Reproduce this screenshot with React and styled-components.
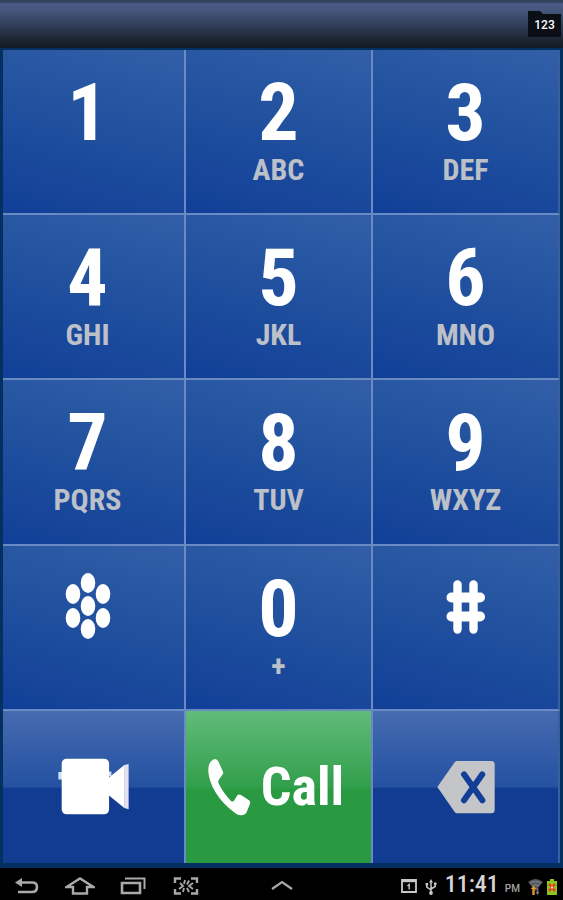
import React from "react";
import styled, { createGlobalStyle, css } from "styled-components";

const KEYS = [
  { digit: "1" },
  { digit: "2", letters: "ABC" },
  { digit: "3", letters: "DEF" },
  { digit: "4", letters: "GHI" },
  { digit: "5", letters: "JKL" },
  { digit: "6", letters: "MNO" },
  { digit: "7", letters: "PQRS" },
  { digit: "8", letters: "TUV" },
  { digit: "9", letters: "WXYZ" },
  { icon: "star", name: "Star" },
  { digit: "0", letters: "+" },
  { icon: "hash", name: "Pound" },
];

function StarIcon() {
  const dots = [
    [24, 14],
    [9, 25],
    [39, 25],
    [24, 37],
    [9, 49],
    [39, 49],
    [24, 60],
  ];

  return (
    <svg width="48" height="80" viewBox="0 0 48 80" fill="#fff">
      {dots.map(([x, y]) => (
        <ellipse key={`${x}-${y}`} cx={x} cy={y} rx="7.3" ry="9.9" />
      ))}
    </svg>
  );
}

function HashIcon() {
  return (
    <svg
      width="48"
      height="80"
      viewBox="0 0 48 80"
      stroke="#fff"
      strokeLinecap="round"
    >
      <path d="M15.5 15.5v45M31.5 15.5v45" strokeWidth="8.4" />
      <path d="M9.5 28.5h28.5M9.5 47.5h28.5" strokeWidth="10" />
    </svg>
  );
}

function CameraIcon() {
  return (
    <svg width="73" height="57" viewBox="172 156 218 172">
      <path d="M175 198h12v23h-12zM325 197h10v14h-10z" fill="#cfe0f5" />
      <rect x="185" y="158" width="143" height="168" rx="15" fill="#fff" />
      <path d="M326 216L375 176V308L326 268Z" fill="#fff" />
      <path d="M374 177L387 174V311L374 307Z" fill="#e2e2f2" />
    </svg>
  );
}

function PhoneIcon() {
  return (
    <svg width="44" height="58" viewBox="80 160 130 174" fill="#fff">
      <path d="M104 163Q111 164 114 172L127 201Q129 206 124 212L114 226Q111 231 115 239Q131 269 151 289Q157 293 161 287L170 272Q175 268 181 271L205 287Q210 291 208 297L199 320Q196 330 184 332Q172 333 163 325Q125 297 104 262Q86 232 83 202Q82 178 92 169Q98 163 104 163Z" />
    </svg>
  );
}

function DeleteIcon() {
  return (
    <svg width="58" height="54" viewBox="202 164 174 160">
      <path
        d="M203 244L255 170Q258 166 263 166H365Q375 166 375 176V313Q375 323 365 323H263Q258 323 255 319Z"
        fill="#c3c5c9"
      />
      <path
        d="M283 206L338 284M338 206L283 284"
        stroke="#133f96"
        strokeWidth="18"
        strokeLinecap="round"
      />
    </svg>
  );
}

function BackIcon() {
  return (
    <svg width="26" height="20" viewBox="0 0 26 20" fill="none">
      <path d="M1 5.500L8 1V10Z" fill="#a9a9a9" />
      <path
        d="M7 5.500H18Q23 5.500 23 10Q23 15 18 15H4"
        stroke="#a9a9a9"
        strokeWidth="2.600"
      />
    </svg>
  );
}

function HomeIcon() {
  return (
    <svg
      width="30"
      height="20"
      viewBox="0 0 30 20"
      fill="none"
      stroke="#a9a9a9"
      strokeWidth="2.400"
    >
      <path d="M1.500 10L15 1.500L28.500 10H22V16.500H8V10Z" />
    </svg>
  );
}

function RecentsIcon() {
  return (
    <svg
      width="26"
      height="20"
      viewBox="0 0 26 20"
      fill="none"
      stroke="#a9a9a9"
      strokeWidth="2.600"
    >
      <path d="M2 6H20V16H2Z" />
      <path d="M5 1.500H24.500V12" strokeWidth="2" />
    </svg>
  );
}

function CaptureIcon() {
  return (
    <svg
      width="26"
      height="20"
      viewBox="0 0 26 20"
      fill="none"
      stroke="#a9a9a9"
      strokeWidth="2.400"
    >
      <path d="M2 6V1.500H8M18 1.500H24V6M24 12V16.500H18M8 16.500H2V12" />
      <path
        d="M12 3L11 7M16 3.500L14 7.500M7 6L10 9L6 12M20 6L16 9L20 12M11 11L10 15M14 11L16 15"
        strokeWidth="1.800"
      />
    </svg>
  );
}

function ChevronIcon() {
  return (
    <svg width="24" height="20" viewBox="0 0 24 20" fill="none">
      <path d="M2 12L12 5L22 12" stroke="#a9a9a9" strokeWidth="2.200" />
    </svg>
  );
}

function CalendarIcon() {
  return (
    <svg width="16" height="16" viewBox="0 0 16 16" fill="none">
      <path d="M1 1H15V13H1Z" stroke="#c8c8c8" strokeWidth="1.800" />
      <path d="M1 2H15" stroke="#c8c8c8" strokeWidth="2.400" />
      <path d="M6.500 7L8.200 5.500V10.500" stroke="#c8c8c8" strokeWidth="1.400" />
    </svg>
  );
}

function UsbIcon() {
  return (
    <svg
      width="12"
      height="16"
      viewBox="0 0 12 16"
      fill="none"
      stroke="#c8c8c8"
      strokeWidth="1.500"
    >
      <path d="M6 3V14M6 11L1.800 8V5M6 10L10.200 7.500V4.500" />
      <path d="M6 0L8 3.500H4Z" fill="#c8c8c8" stroke="none" />
      <circle cx="6" cy="14" r="1.900" fill="#c8c8c8" stroke="none" />
      <path
        d="M.6 4h2.600v2.400H.6zM8.900 3.600h2.600v2.400H8.900z"
        fill="#c8c8c8"
        stroke="none"
      />
    </svg>
  );
}

function WifiIcon() {
  return (
    <svg width="15" height="18" viewBox="0 0 15 18">
      <path d="M0 4Q7.500 -2 15 4L7.500 13Z" fill="#55585a" />
      <path
        d="M2 5.500Q7.500 1.500 13 5.500M4 8Q7.500 5.500 11 8"
        fill="none"
        stroke="#85898c"
      />
      <path d="M5.500 8L8.500 11H6.700V17H4.300V11H2.700Z" fill="#e9962f" />
      <path d="M9.500 17L7.500 14H8.700V10H10.300V14H11.500Z" fill="#777" />
    </svg>
  );
}

function BatteryIcon() {
  return (
    <svg width="10" height="16" viewBox="0 0 10 16">
      <path d="M3 0H7V2H10V16H0V2H3Z" fill="#8cc522" />
      <path d="M2 5L8 12M8 5L2 12" stroke="#e8381c" strokeWidth="2.400" />
      <path d="M4 7.500H6V9.500H4Z" fill="#ffd9b0" />
    </svg>
  );
}

function Key({ digit, letters, icon, name }) {
  return (
    <KeyButton type="button" aria-label={name}>
      {icon === "star" && <StarIcon />}
      {icon === "hash" && <HashIcon />}
      {digit && <Digit>{digit}</Digit>}
      {letters && <Letters>{letters}</Letters>}
    </KeyButton>
  );
}

function App() {
  return (
    <Container>
      <GlobalStyle />
      <Header>
        <ModeButton type="button">123</ModeButton>
      </Header>

      <Keypad>
        {KEYS.map((key) => (
          <Key key={key.digit || key.icon} {...key} />
        ))}
        <ActionButton type="button" aria-label="Video call">
          <CameraIcon />
        </ActionButton>
        <ActionButton type="button" $call>
          <PhoneIcon />
          Call
        </ActionButton>
        <ActionButton type="button" aria-label="Delete">
          <DeleteIcon />
        </ActionButton>
      </Keypad>

      <SystemBar>
        <NavGroup>
          <NavButton type="button" aria-label="Back">
            <BackIcon />
          </NavButton>
          <NavButton type="button" aria-label="Home">
            <HomeIcon />
          </NavButton>
          <NavButton type="button" aria-label="Recent apps">
            <RecentsIcon />
          </NavButton>
          <NavButton type="button" aria-label="Screenshot">
            <CaptureIcon />
          </NavButton>
        </NavGroup>
        <NavButton type="button" aria-label="Show tray">
          <ChevronIcon />
        </NavButton>
        <StatusGroup>
          <CalendarIcon />
          <UsbIcon />
          <Clock>
            11:41
            <Meridiem>PM</Meridiem>
          </Clock>
          <StatusIcons>
            <WifiIcon />
            <BatteryIcon />
          </StatusIcons>
        </StatusGroup>
      </SystemBar>
    </Container>
  );
}

export default App;

const GlobalStyle = createGlobalStyle`
  * {
    box-sizing: border-box;
  }

  body {
    margin: 0;
    background-color: #000;
  }

  button {
    border: 0;
    padding: 0;
    background: none;
    color: inherit;
    font: inherit;
    cursor: pointer;
  }

  svg {
    display: block;
    flex-shrink: 0;
  }
`;

const Container = styled.div`
  display: flex;
  flex-direction: column;
  min-height: 100vh;
  background-color: #04305f;
  color: #fff;
  font-family: "Roboto Condensed", Roboto, sans-serif;
`;

const Header = styled.header`
  display: flex;
  justify-content: flex-end;
  align-items: center;
  height: 48px;
  padding-right: 2px;
  background: linear-gradient(
    #2e405c 0,
    #34455f 2px,
    #4a5c86 4px,
    #46577c 10px,
    #2f3d56 26px,
    #1b2431 40px,
    #141a24 100%
  );
`;

const ModeButton = styled.button`
  width: 33px;
  height: 26px;
  padding-top: 2px;
  background-color: #0b0e15;
  clip-path: polygon(0 0, 12px 0, 15px 3px, 100% 3px, 100% 100%, 0 100%);
  font-family: Roboto, sans-serif;
  font-size: 12px;
  font-weight: 500;
`;

const Keypad = styled.main`
  flex: 1;
  display: grid;
  grid-template-columns: 183fr 187fr 187fr;
  grid-template-rows: repeat(4, 166fr) 153fr;
  padding: 2px 3px 5px;
`;

const cell = css`
  display: flex;
  align-items: center;
  border-right: 2px solid #6a8ac4;
  border-bottom: 2px solid #6a8ac4;

  &:nth-child(3n) {
    border-right-color: #3a5f9f;
  }
`;

const KeyButton = styled.button`
  ${cell}
  flex-direction: column;
  justify-content: flex-start;
  padding-top: 23px;
  background: linear-gradient(195deg, #325fa7 0%, #20509e 48%, #113f98 100%);

  &:nth-child(3n + 1) {
    padding-right: 12px;
  }
`;

const ActionButton = styled.button`
  ${cell}
  justify-content: center;
  gap: 10px;
  padding-right: ${({ $call }) => ($call ? "6px" : "0")};
  border-bottom: 0;
  background: ${({ $call }) =>
    $call
      ? "linear-gradient(#62bb7b, #319f4b 50%, #299a41 52%)"
      : "linear-gradient(#466bb0, #2451a1 50%, #113c92 51%)"};
  font-size: 54px;
  font-weight: bold;
  line-height: 60px;
`;

const Digit = styled.span`
  font-size: 80px;
  font-weight: bold;
  line-height: 80px;
`;

const Letters = styled.span`
  color: #bcc0c9;
  font-size: 30px;
  font-weight: bold;
  line-height: 34px;
`;

const SystemBar = styled.footer`
  display: grid;
  grid-template-columns: 1fr auto 1fr;
  align-items: center;
  height: 32px;
  background-color: #000;
`;

const NavGroup = styled.nav`
  display: flex;
`;

const NavButton = styled.button`
  display: flex;
  align-items: center;
  justify-content: center;
  width: 53px;
  height: 32px;
`;

const StatusGroup = styled.div`
  display: flex;
  align-items: center;
  justify-content: flex-end;
  gap: 8px;
  padding-right: 6px;
  color: #d4d4d4;
`;

const StatusIcons = styled.div`
  display: flex;
  align-items: center;
  gap: 4px;
`;

const Clock = styled.time`
  display: flex;
  align-items: baseline;
  gap: 6px;
  font-size: 24px;
  font-weight: 500;
  line-height: 32px;
`;

const Meridiem = styled.small`
  color: #a5a5a5;
  font-family: Roboto, sans-serif;
  font-size: 10px;
`;
